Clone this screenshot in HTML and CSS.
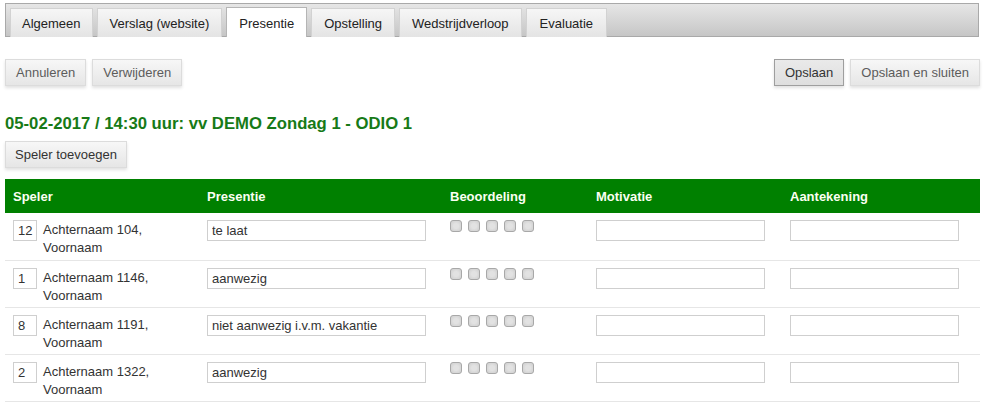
FILE: index.html
```html
<!DOCTYPE html>
<html lang="nl">
<head>
<meta charset="utf-8">
<title>Presentie</title>
<link rel="stylesheet" href="styles.css">
</head>
<body>
<div class="page">
  <nav class="tabbar">
    <a class="tab first">Algemeen</a>
    <a class="tab">Verslag (website)</a>
    <a class="tab active">Presentie</a>
    <a class="tab">Opstelling</a>
    <a class="tab">Wedstrijdverloop</a>
    <a class="tab last">Evaluatie</a>
  </nav>

  <div class="actions">
    <div class="group">
      <button class="btn">Annuleren</button>
      <button class="btn">Verwijderen</button>
    </div>
    <div class="group">
      <button class="btn pressed">Opslaan</button>
      <button class="btn">Opslaan en sluiten</button>
    </div>
  </div>

  <h1 class="title">05-02-2017 / 14:30 uur: vv DEMO Zondag 1 - ODIO 1</h1>
  <button class="btn add">Speler toevoegen</button>

  <table class="grid">
    <colgroup>
      <col class="c1"><col class="c2"><col class="c3"><col class="c4"><col class="c5">
    </colgroup>
    <thead>
      <tr><th>Speler</th><th>Presentie</th><th>Beoordeling</th><th>Motivatie</th><th>Aantekening</th></tr>
    </thead>
    <tbody>
      <tr>
        <td><div class="player"><input class="num" value="12"><span class="name">Achternaam 104, Voornaam</span></div></td>
        <td><input class="txt pres" value="te laat"></td>
        <td><div class="rate"><span class="cb"></span><span class="cb"></span><span class="cb"></span><span class="cb"></span><span class="cb"></span></div></td>
        <td><input class="txt mid"></td>
        <td><input class="txt mid"></td>
      </tr>
      <tr>
        <td><div class="player"><input class="num" value="1"><span class="name">Achternaam 1146, Voornaam</span></div></td>
        <td><input class="txt pres" value="aanwezig"></td>
        <td><div class="rate"><span class="cb"></span><span class="cb"></span><span class="cb"></span><span class="cb"></span><span class="cb"></span></div></td>
        <td><input class="txt mid"></td>
        <td><input class="txt mid"></td>
      </tr>
      <tr>
        <td><div class="player"><input class="num" value="8"><span class="name">Achternaam 1191, Voornaam</span></div></td>
        <td><input class="txt pres" value="niet aanwezig i.v.m. vakantie"></td>
        <td><div class="rate"><span class="cb"></span><span class="cb"></span><span class="cb"></span><span class="cb"></span><span class="cb"></span></div></td>
        <td><input class="txt mid"></td>
        <td><input class="txt mid"></td>
      </tr>
      <tr>
        <td><div class="player"><input class="num" value="2"><span class="name">Achternaam 1322, Voornaam</span></div></td>
        <td><input class="txt pres" value="aanwezig"></td>
        <td><div class="rate"><span class="cb"></span><span class="cb"></span><span class="cb"></span><span class="cb"></span><span class="cb"></span></div></td>
        <td><input class="txt mid"></td>
        <td><input class="txt mid"></td>
      </tr>
    </tbody>
  </table>
</div>
</body>
</html>
```

FILE: styles.css
```css
* { box-sizing: border-box; }
html, body { margin: 0; padding: 0; background: #fff; }
body {
  font-family: "Liberation Sans", Arial, sans-serif;
  font-size: 13px;
  color: #333;
}
.page { padding: 3px 9px 0 5px; }

/* tabs */
.tabbar {
  display: flex;
  align-items: flex-end;
  gap: 4px;
  height: 34px;
  padding: 0 4px;
  border: 1px solid #a9a9a9;
  background: linear-gradient(#e6e6e6, #c6c6c6);
  width: 974px;
}
.tab {
  display: flex;
  align-items: center;
  height: 29px;
  margin-bottom: -1px;
  padding: 1px 12px 0;
  border: 1px solid #d2d2d2;
  border-bottom: none;
  background: linear-gradient(#f6f6f6, #e4e4e4);
  color: #222;
  white-space: nowrap;
}
.tab.first { padding: 1px 11px 0; }
.tab.last { padding: 1px 13px 0; }
.tab.active {
  background: #fff;
  border-color: #b5b5b5;
  height: 30px;
}

/* buttons */
.actions {
  display: flex;
  justify-content: space-between;
  margin-top: 22px;
}
.group { display: flex; gap: 6px; }
.btn {
  height: 27px;
  padding: 0 10px;
  font: inherit;
  color: #5c5c5c;
  background: linear-gradient(#f7f7f7, #e6e6e6);
  border: 1px solid #dcdcdc;
  box-shadow: 0 2px 3px rgba(0,0,0,0.12);
  cursor: pointer;
}
.btn.pressed {
  border-color: #9e9e9e;
  background: linear-gradient(#eaeaea, #dedede);
  color: #333;
}
.title {
  margin: 28px 0 0;
  font-size: 16.7px;
  line-height: 20px;
  font-weight: bold;
  color: #177a17;
}
.btn.add { margin-top: 7px; color: #333; padding: 0 9px; }

/* table */
.grid {
  margin-top: 11px;
  width: 975px;
  border-collapse: collapse;
  table-layout: fixed;
}
.c1 { width: 194px; }
.c2 { width: 243px; }
.c3 { width: 146px; }
.c4 { width: 194px; }
.c5 { width: 198px; }
.grid th {
  height: 34px;
  padding: 1px 8px 0;
  background: #008000;
  color: #fbfff2;
  font-weight: bold;
  text-align: left;
}
.grid td {
  height: 47px;
  padding: 7px 8px 0;
  vertical-align: top;
  border-bottom: 1px solid #e6e6e6;
}
.player { display: flex; gap: 6px; align-items: flex-start; }
.num {
  width: 24px;
  height: 21px;
  flex: none;
  padding: 0 0 0 4px;
  border: 1px solid #cfcfcf;
  font: inherit;
  color: #333;
}
.name { line-height: 18px; margin-top: 1px; }
.txt {
  display: block;
  height: 21px;
  padding: 0 4px;
  border: 1px solid #cfcfcf;
  font: inherit;
  color: #333;
}
.pres { width: 219px; }
.mid { width: 169px; }
.rate { display: flex; gap: 6px; }
.cb {
  width: 12px;
  height: 12px;
  border: 1px solid #a8a8a8;
  border-radius: 3px;
  background: radial-gradient(circle, #e2e2e2 35%, #d6d6d6 70%);
}
```
